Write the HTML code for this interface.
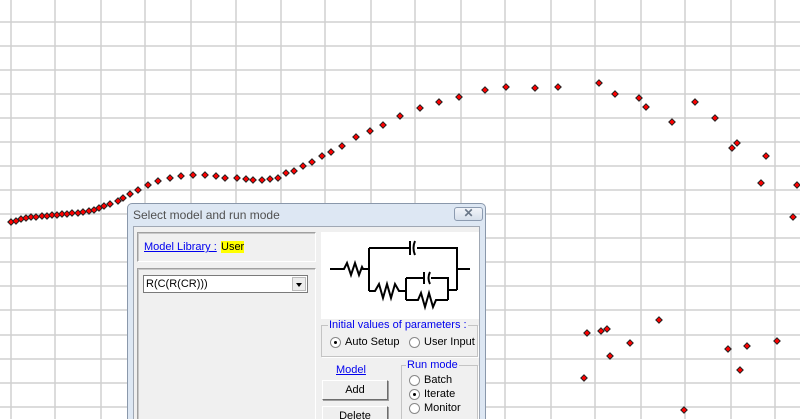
<!DOCTYPE html>
<html style="width:800px;height:419px;overflow:hidden"><head><meta charset="utf-8"><style>
*{margin:0;padding:0;box-sizing:border-box}
body{width:800px;height:419px;overflow:hidden;background:#fff;position:relative;font-family:"Liberation Sans",sans-serif;font-size:11px}
.a{position:absolute}
.dlg{left:127px;top:203px;width:359px;height:216px;overflow:hidden;background:#dde7f3;border:1px solid #8a98ab;border-bottom:0;border-radius:5px 5px 0 0}
.body{left:5px;top:22px;width:347px;height:193px;overflow:hidden;background:#f0f0f0;border:1px solid #a0a8b4;border-bottom:0}
.sunk{border:1px solid;border-color:#a0a0a0 #fff #fff #a0a0a0;box-shadow:inset 1px 1px 0 #c8c8c8}
.btn{background:#efefef;border:1px solid;border-color:#fff #6d6d6d #6d6d6d #fff;box-shadow:1px 1px 0 #a0a0a0;text-align:center;line-height:18px;font-size:11px;color:#000}
.grp{border:1px solid #c4c4c4;box-shadow:1px 1px 0 #fff}
.lg{position:absolute;top:-7px;left:6px;background:#f0f0f0;color:#0000ee;padding:0 1px}
.rad{position:absolute;width:11px;height:11px;border-radius:50%;border:1px solid #888;background:#fff}
.rad.on::after{content:"";position:absolute;left:3px;top:3px;width:3px;height:3px;border-radius:50%;background:#000}
.t{position:absolute;white-space:nowrap;color:#000}
.t.lnk{color:#0000ee;text-decoration:underline}
</style></head><body>
<svg class="a" style="left:0;top:0" width="800" height="419">
<g stroke="#d0d0d0" stroke-width="1.5">
<path d="M11 0V419M55 0V419M101 0V419M145 0V419M191 0V419M236 0V419M281 0V419M325 0V419M371 0V419M415 0V419M461 0V419M505 0V419M551 0V419M595 0V419M641 0V419M685 0V419M731 0V419M775 0V419"/>
<path d="M0 22H800M0 46H800M0 70H800M0 94H800M0 118H800M0 142H800M0 166H800M0 190H800M0 214H800M0 238H800M0 262H800M0 286H800M0 310H800M0 335H800M0 359H800M0 383H800M0 407H800"/>
</g>
<defs><path id="d" d="M0 -3.2L3.2 0L0 3.2L-3.2 0Z" fill="#f00" stroke="#222" stroke-width="1"/></defs>
<g>
<use href="#d" x="11" y="222"/><use href="#d" x="16" y="221"/><use href="#d" x="21" y="219"/><use href="#d" x="26" y="218"/><use href="#d" x="31" y="217"/><use href="#d" x="36" y="217"/><use href="#d" x="42" y="216"/><use href="#d" x="47" y="216"/><use href="#d" x="52" y="215"/><use href="#d" x="57" y="215"/><use href="#d" x="62" y="214"/><use href="#d" x="67" y="214"/><use href="#d" x="72" y="213"/><use href="#d" x="78" y="213"/><use href="#d" x="83" y="212"/><use href="#d" x="89" y="211"/><use href="#d" x="94" y="210"/><use href="#d" x="99" y="208"/><use href="#d" x="104" y="206"/><use href="#d" x="110" y="204"/><use href="#d" x="118" y="201"/><use href="#d" x="123" y="198"/><use href="#d" x="130" y="194"/><use href="#d" x="138" y="190"/><use href="#d" x="148" y="185"/><use href="#d" x="158" y="181"/><use href="#d" x="170" y="178"/><use href="#d" x="181" y="176"/><use href="#d" x="193" y="175"/><use href="#d" x="205" y="175"/><use href="#d" x="216" y="176"/><use href="#d" x="225" y="178"/><use href="#d" x="237" y="178"/><use href="#d" x="246" y="179"/><use href="#d" x="253" y="180"/><use href="#d" x="262" y="180"/><use href="#d" x="270" y="179"/><use href="#d" x="278" y="178"/><use href="#d" x="286" y="173"/><use href="#d" x="294" y="171"/><use href="#d" x="303" y="166"/><use href="#d" x="312" y="162"/><use href="#d" x="322" y="156"/><use href="#d" x="331" y="152"/><use href="#d" x="342" y="146"/><use href="#d" x="356" y="137"/><use href="#d" x="370" y="131"/><use href="#d" x="383" y="125"/><use href="#d" x="400" y="116"/><use href="#d" x="420" y="108"/><use href="#d" x="439" y="102"/><use href="#d" x="459" y="97"/><use href="#d" x="485" y="90"/><use href="#d" x="506" y="87"/><use href="#d" x="535" y="88"/><use href="#d" x="558" y="87"/><use href="#d" x="599" y="83"/><use href="#d" x="615" y="94"/><use href="#d" x="639" y="98"/><use href="#d" x="646" y="107"/><use href="#d" x="672" y="122"/><use href="#d" x="695" y="102"/><use href="#d" x="715" y="118"/><use href="#d" x="732" y="148"/><use href="#d" x="737" y="143"/><use href="#d" x="766" y="156"/><use href="#d" x="761" y="183"/><use href="#d" x="797" y="185"/><use href="#d" x="793" y="217"/>
<use href="#d" x="587" y="333"/><use href="#d" x="601" y="331"/><use href="#d" x="607" y="329"/><use href="#d" x="610" y="356"/><use href="#d" x="630" y="343"/><use href="#d" x="659" y="320"/><use href="#d" x="584" y="378"/><use href="#d" x="684" y="410"/><use href="#d" x="728" y="349"/><use href="#d" x="747" y="346"/><use href="#d" x="740" y="370"/><use href="#d" x="777" y="341"/>
</g>
</svg>

<div class="a dlg">
  <div class="t" style="left:5px;top:4px;color:#505050;font-size:12px">Select model and run mode</div>
  <div class="a" style="left:326px;top:3px;width:29px;height:14px;border:1px solid #8c9bb0;border-radius:3px;background:linear-gradient(#f2f5fa,#d6dfeb);text-align:center;line-height:11px;color:#6a7788;font-size:12px;font-weight:bold">✕</div>
  <div class="a body">
    <div class="a sunk" style="left:3px;top:5px;width:179px;height:30px">
      <span class="t lnk" style="left:6px;top:8px">Model Library :</span>
      <span class="t" style="left:83px;top:8px;background:#ff0">User</span>
    </div>
    <div class="a sunk" style="left:3px;top:41px;width:179px;height:152px;border-bottom:0">
      <div class="a" style="left:5px;top:6px;width:165px;height:18px;background:#fff;border:1px solid #7a7a7a">
        <span class="t" style="left:2px;top:2px">R(C(R(CR)))</span>
        <div class="a" style="right:1px;top:1px;width:14px;height:14px;background:#ececec;border:1px solid #bbb"><div class="a" style="left:3px;top:5px;border:3px solid transparent;border-top:4px solid #000;border-bottom:0"></div></div>
      </div>
    </div>
    <svg class="a" style="left:187px;top:5px" width="159" height="87">
      <rect width="159" height="87" fill="#fff"/>
      <g transform="translate(-320,-231)" fill="none" stroke="#000" stroke-width="2">
        <path d="M329 268H343L346 262L350 274L354 262L358 274L361 266L362 268H368"/>
        <path d="M368 247V290M368 247H409M416 247H456V289M456 268H469"/>
        <path d="M409 240V254M414 240Q411 247 414 254"/>
        <path d="M368 290H374L378 283L382 297L386 283L390 297L394 283L398 290H405"/>
        <path d="M405 277V299M405 277H423M430 277H447V299M447 289H456"/>
        <path d="M423 271V283M429 271Q426 277 429 283"/>
        <path d="M405 299H417L420 292L424 306L428 292L432 306L435 299H447"/>
      </g>
    </svg>
    <div class="a grp" style="left:187px;top:98px;width:157px;height:32px">
      <span class="lg">Initial values of parameters :</span>
      <div class="rad on" style="left:8px;top:11px"></div><span class="t" style="left:23px;top:10px">Auto Setup</span>
      <div class="rad" style="left:87px;top:11px"></div><span class="t" style="left:102px;top:10px">User Input</span>
    </div>
    <span class="t lnk" style="left:202px;top:137px">Model</span>
    <div class="a btn" style="left:188px;top:153px;width:66px;height:20px">Add</div>
    <div class="a btn" style="left:188px;top:179px;width:66px;height:14px;border-bottom:0;overflow:hidden">Delete</div>
    <div class="a grp" style="left:267px;top:138px;width:77px;height:55px;border-bottom:0">
      <span class="lg" style="left:4px">Run mode</span>
      <div class="rad" style="left:7px;top:9px"></div><span class="t" style="left:22px;top:8px">Batch</span>
      <div class="rad on" style="left:7px;top:23px"></div><span class="t" style="left:22px;top:22px">Iterate</span>
      <div class="rad" style="left:7px;top:37px"></div><span class="t" style="left:22px;top:36px">Monitor</span>
    </div>
  </div>
</div>
</body></html>
